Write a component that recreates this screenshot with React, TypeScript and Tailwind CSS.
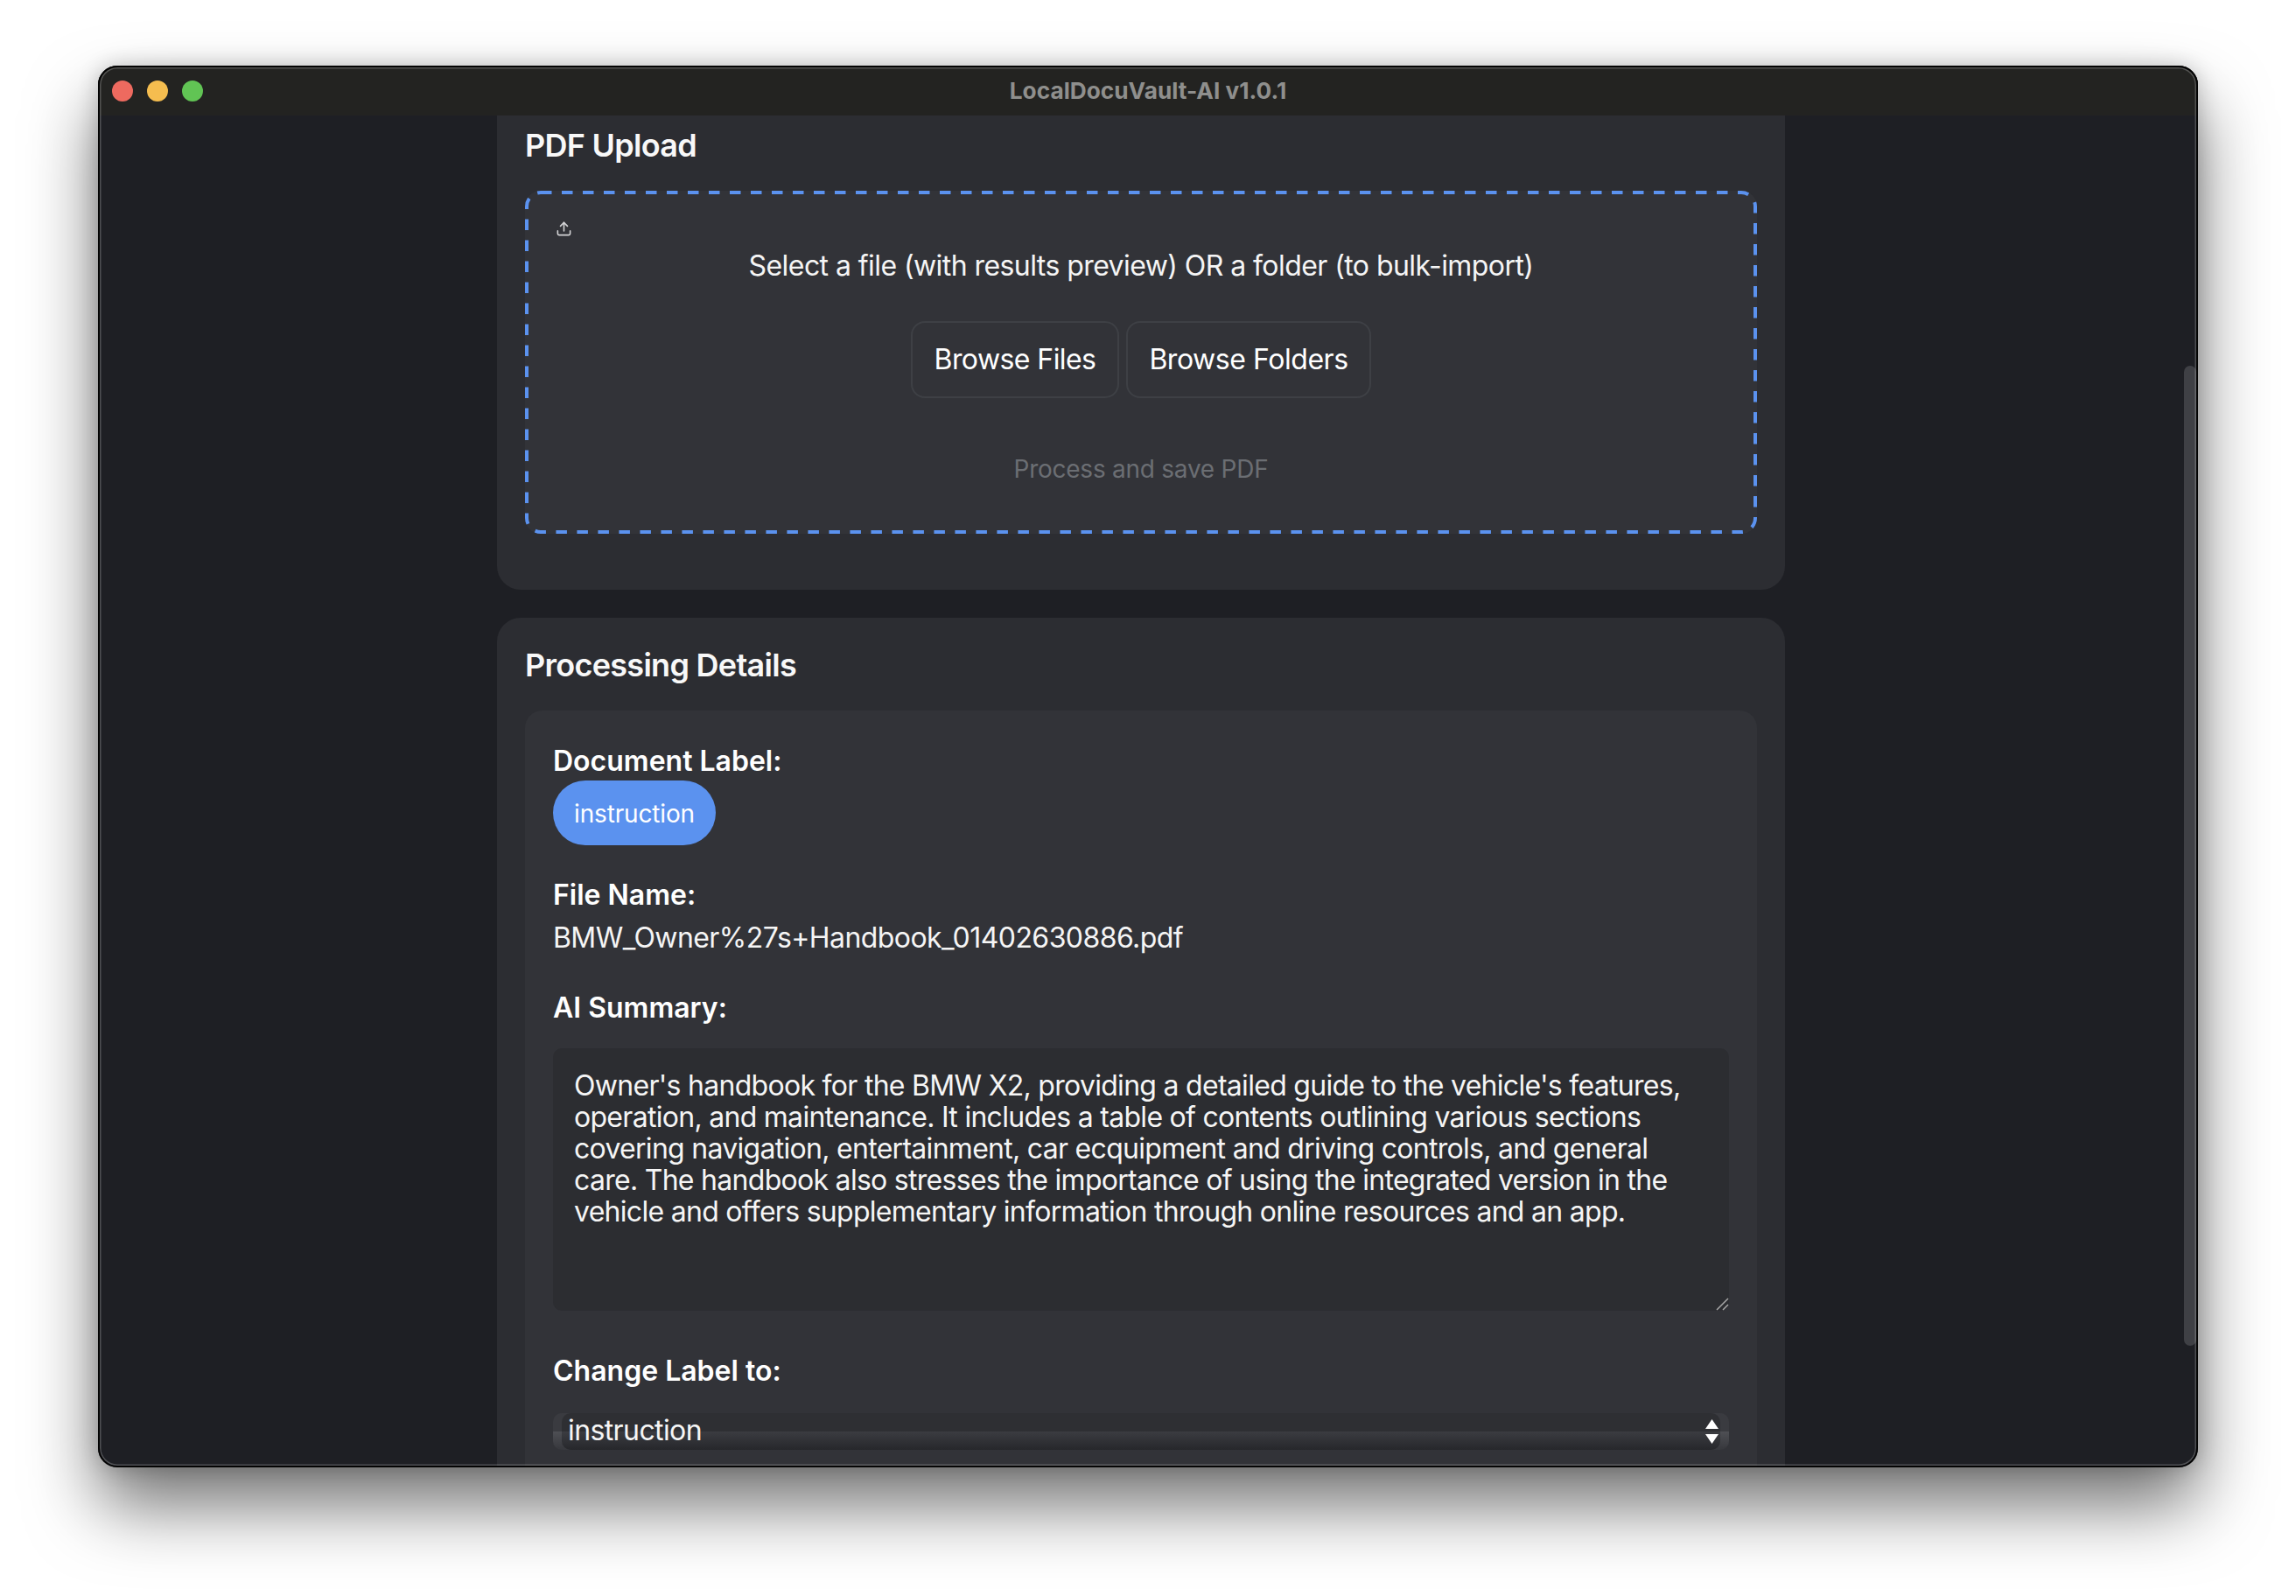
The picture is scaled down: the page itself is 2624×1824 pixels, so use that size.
import { Upload } from "lucide-react";

const font = { fontFamily: "Inter, 'Noto Sans', sans-serif" };

function Panel({ title, className, children }: { title: string; className: string; children: React.ReactNode }) {
  return (
    <section className={`bg-[#2c2d32] px-[32px] ${className}`}>
      <h2 className="text-[36px] leading-[44px] font-semibold tracking-[-0.72px] text-[#f8f8f8]">{title}</h2>
      {children}
    </section>
  );
}

function Field({ className, children }: { className: string; children: React.ReactNode }) {
  return <div className={`text-[32px] leading-[40px] font-semibold text-white ${className}`}>{children}</div>;
}

export default function App() {
  return (
    <div className="w-[2624px] h-[1824px] bg-white pt-[75px] pl-[112px] overflow-hidden" style={font}>
      <div className="relative w-[2400px] h-[1602px] rounded-[22px] bg-[#1e1f24] shadow-[0_44px_80px_rgba(0,0,0,0.55),0_0_24px_rgba(0,0,0,0.2)]">
        <div className="h-full w-full overflow-hidden rounded-[22px] flex flex-col">
          <header className="relative h-[57px] shrink-0 bg-[#232321] flex items-center justify-center">
            <div className="absolute left-[16px] top-[17px] flex gap-[16px]">
              <span className="w-[24px] h-[24px] rounded-full bg-[#ee6a5f]" />
              <span className="w-[24px] h-[24px] rounded-full bg-[#f5bd4f]" />
              <span className="w-[24px] h-[24px] rounded-full bg-[#61c454]" />
            </div>
            <span className="text-[26.25px] font-bold text-[#8f8f8d]">LocalDocuVault-AI v1.0.1</span>
          </header>

          <main className="flex-1 overflow-hidden pl-[456px]">
            <div className="w-[1472px] flex flex-col gap-[32px]">
              <Panel title="PDF Upload" className="h-[542px] rounded-b-[27px] pt-[12px]">
                <div className="relative mt-[30px] h-[392px] rounded-[18px] bg-[#323338] pt-[34px]">
                  <svg className="absolute inset-0 w-full h-full" fill="none">
                    <rect x="2" y="2" width="1404" height="388" rx="16" stroke="#5b92ef" strokeWidth="4" strokeDasharray="12.5 11.5" />
                  </svg>
                  <Upload className="ml-[35px] w-[19px] h-[19px] text-[#d4d4d6]" strokeWidth={2} />
                  <p className="mt-[13px] text-center text-[32px] leading-[40px] tracking-[-0.57px] text-[#f5f5f5]">
                    Select a file (with results preview) OR a folder (to bulk-import)
                  </p>
                  <div className="mt-[43px] flex justify-center gap-[8px]">
                    <button className="w-[238px] h-[88px] rounded-[16px] border-2 border-[#3e4045] text-[32px] tracking-[-0.57px] text-white">Browse Files</button>
                    <button className="w-[280px] h-[88px] rounded-[16px] border-2 border-[#3e4045] text-[32px] tracking-[-0.45px] text-white">Browse Folders</button>
                  </div>
                  <p className="mt-[63px] text-center text-[28px] leading-[36px] tracking-[-0.25px] text-[#6b6e73]">Process and save PDF</p>
                </div>
              </Panel>

              <Panel title="Processing Details" className="h-[1000px] rounded-[27px] pt-[32px]">
                <div className="mt-[30px] h-[900px] rounded-[20px] bg-[#323338] px-[32px] pt-[38px]">
                  <Field className="">Document Label:</Field>
                  <div className="mt-[2px] w-[186px] h-[74px] rounded-full bg-[#5b92ef] flex items-center justify-center pt-[2px] text-[28px] tracking-[-0.15px] text-white">instruction</div>
                  <Field className="mt-[37px]">File Name:</Field>
                  <p className="mt-[9px] text-[32px] leading-[40px] tracking-[-0.57px] text-[#f5f5f5]">BMW_Owner%27s+Handbook_01402630886.pdf</p>
                  <Field className="mt-[40px]">AI Summary:</Field>
                  <div className="relative mt-[26px] h-[300px] rounded-[10px] bg-[#2c2d31] pl-[24px] pr-[48px] pt-[25px] text-[32px] leading-[36px] tracking-[-0.71px] text-[#f5f5f5]">
                    Owner's handbook for the BMW X2, providing a detailed guide to the vehicle's features, operation, and maintenance. It includes a table of contents outlining various sections covering navigation, entertainment, car ecquipment and driving controls, and general care. The handbook also stresses the importance of using the integrated version in the vehicle and offers supplementary information through online resources and an app.
                    <svg className="absolute right-0 bottom-0 w-[16px] h-[16px]" viewBox="0 0 16 16" fill="none">
                      <path d="M2 15 15 2M9 15l6-6" stroke="#a8a8a8" strokeWidth="1.5" />
                    </svg>
                  </div>
                  <Field className="mt-[49px]">Change Label to:</Field>
                  <div className="relative mt-[28px] h-[42px] rounded-[10px] bg-[linear-gradient(#3a3b40_0%,#3a3b40_50%,#4e4f54_50%,#36373c_100%)] px-[10px]">
                    <div className="h-full rounded-[10px] bg-[linear-gradient(#2e2f33_0%,#2e2f33_50%,#3b3c41_50%,#26272b_100%)] pl-[7px] text-[32px] leading-[40px] tracking-[-0.6px] text-[#f5f5f5]">
                      instruction
                    </div>
                    <svg className="absolute right-[12px] top-[7px] w-[15px] h-[28px]" viewBox="0 0 15 28" fill="#fff">
                      <path d="M7.5 0 15 11H0zM0 17H15L7.5 28z" />
                    </svg>
                  </div>
                </div>
              </Panel>
            </div>
          </main>
        </div>
        <div className="absolute right-[2px] top-[343px] w-[14px] h-[1120px] rounded-full bg-[#3f4045]" />
        <div className="absolute inset-0 rounded-[22px] border-2 border-black/90 shadow-[inset_0_0_0_1.5px_rgba(255,255,255,0.22)] pointer-events-none" />
      </div>
    </div>
  );
}
